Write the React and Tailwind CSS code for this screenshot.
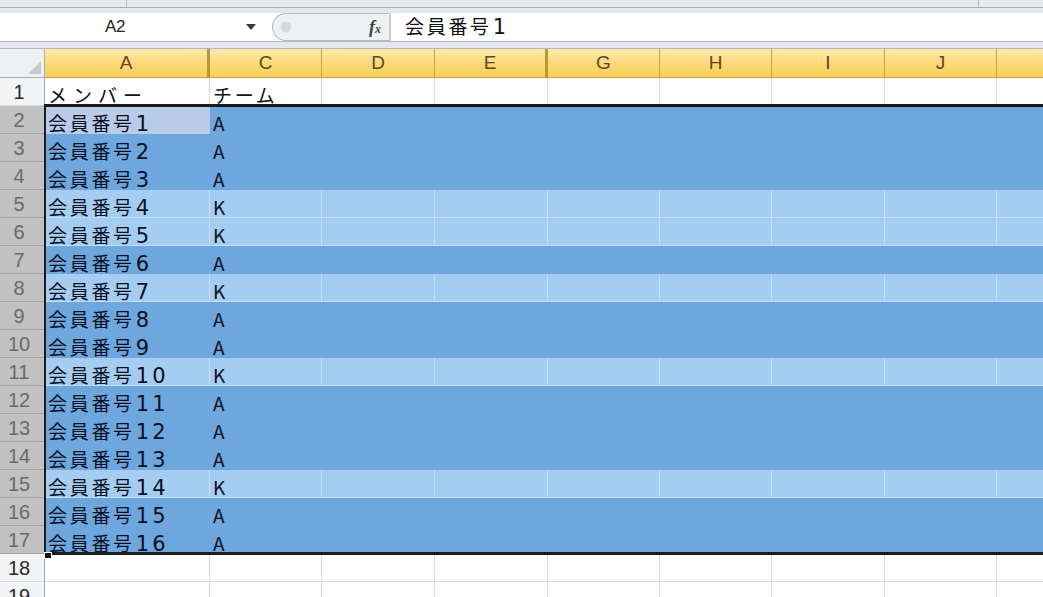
import React from "react";

const COLS = [
  { l: "A", w: "w-[165px]", thick: true },
  { l: "C", w: "w-[112px]" },
  { l: "D", w: "w-[113px]" },
  { l: "E", w: "w-[113px]", thick: true },
  { l: "G", w: "w-[112px]" },
  { l: "H", w: "w-[112px]" },
  { l: "I", w: "w-[113px]" },
  { l: "J", w: "w-[112px]" },
  { l: "", w: "w-[112px]" },
];

const TEAMS = ["A", "A", "A", "K", "K", "A", "K", "A", "A", "K", "A", "A", "A", "K", "A", "A"];

const CJK = { fontFamily: '"Noto Sans CJK JP", "Noto Sans", sans-serif' };
const LAT = { fontFamily: '"Liberation Sans", Arial, sans-serif' };
const DIG = { fontFamily: '"DejaVu Sans", "Liberation Sans", sans-serif' };

function Txt({ text, wide }) {
  if (!text) return null;
  const parts = text.match(/(\d+|\D+)/g) || [];
  return (
    <span className="whitespace-nowrap">
      {parts.map((p, i) =>
        /\d/.test(p) ? (
          <span key={i} style={DIG} className="text-[21px] tracking-[3px] ml-[1px]">
            {p}
          </span>
        ) : (
          <span
            key={i}
            style={CJK}
            className={"text-[19px] " + (wide ? "tracking-[6px]" : "tracking-[2.7px]")}
          >
            {p}
          </span>
        )
      )}
    </span>
  );
}

function RowHeader({ num, sel }) {
  return (
    <div
      style={LAT}
      className={
        "w-[45px] shrink-0 h-[28px] border-r border-b flex items-center justify-center pr-[6px] text-[20px] leading-none " +
        (sel
          ? "bg-[#c1c1c1] text-[#6a6a6a] border-r-[#8e8e8e] border-b-[#a2a2a2]"
          : "bg-[#f3f4f5] text-[#2a2a2a] border-r-[#9ea2a6] border-b-[#d5d7da]")
      }
    >
      {num}
    </div>
  );
}

function Cell({ w, text, kind, wide }) {
  let cls = "";
  if (kind === "white") cls = "bg-white border-r-[#d9dbdd] border-b-[#d9dbdd]";
  else if (kind === "K") cls = "bg-[#a5cdf1] border-r-[#c4def6] border-b-[#c4def6]";
  else if (kind === "A") cls = "bg-[#6ea6de] border-r-[#6ea6de] border-b-[#6ea6de]";
  else if (kind === "active") cls = "bg-[#b9cbe8] border-r-[#b9cbe8] border-b-[#b9cbe8]";
  return (
    <div
      className={
        w +
        " shrink-0 h-[28px] border-r border-b flex items-end whitespace-nowrap leading-[16px] pl-[3px] text-[#0a1120] " +
        cls
      }
    >
      <Txt text={text} wide={wide} />
    </div>
  );
}

function DataRow({ num, sel, values, kinds, wide }) {
  return (
    <div className="flex">
      <RowHeader num={num} sel={sel} />
      {COLS.map((c, i) => (
        <Cell key={i} w={c.w} text={values[i] || ""} kind={kinds[i]} wide={wide && i === 0} />
      ))}
    </div>
  );
}

function Formula() {
  return (
    <div className="h-[29px] bg-white flex border-b border-[#b9bdc2]">
      <div className="w-[230px] shrink-0 flex items-center justify-center">
        <span style={LAT} className="text-[17px] text-[#222] tracking-[-0.5px]">A2</span>
      </div>
      <div className="w-[42px] shrink-0 flex items-center justify-center">
        <svg width="10" height="6" viewBox="0 0 10 6">
          <path d="M0 0 L10 0 L5 6 Z" fill="#3a3a3a" />
        </svg>
      </div>
      <div className="w-[117px] shrink-0 h-full rounded-l-full border-l border-y border-[#b3b7bc] bg-[#eef0f2] flex items-center relative">
        <div className="ml-[7px] w-[12px] h-[12px] rounded-full bg-[#d3d6da] border border-[#e6e8ea]" />
        <div className="ml-auto mr-[8px] flex items-baseline" style={{ fontFamily: '"Liberation Serif", serif' }}>
          <span className="italic font-bold text-[18px] text-[#444]">f</span>
          <span className="italic font-bold text-[12px] text-[#444]">x</span>
        </div>
      </div>
      <div className="w-[2px] shrink-0 bg-[#c8cbcf]" />
      <div className="flex-1 flex items-center pl-[14px] leading-[22px] text-[#111]">
        <Txt text="会員番号1" />
      </div>
    </div>
  );
}

export default function App() {
  return (
    <div className="w-[1043px] h-[597px] overflow-hidden bg-white relative">
      {/* ribbon remnant */}
      <div className="h-[8px] bg-[#e6e9ed] flex border-b border-[#a9aeb4]">
        <div className="w-[127px] border-r border-[#b8bcc1]" />
        <div className="w-[852px] border-r border-[#b8bcc1]" />
        <div className="flex-1" />
      </div>
      <div className="h-[5px] bg-[#e3e6ea]" />
      <Formula />
      <div className="h-[7px] bg-[#e4e7eb] border-b border-[#b4b8bd]" />

      {/* column headers */}
      <div className="flex h-[29px]">
        <div className="w-[45px] shrink-0 bg-[#eef0f2] border-r border-b border-[#a9adb2] relative">
          <svg className="absolute right-[3px] bottom-[3px]" width="13" height="13" viewBox="0 0 13 13">
            <path d="M13 0 L13 13 L0 13 Z" fill="#c7cacd" />
          </svg>
        </div>
        {COLS.map((c, i) => (
          <div
            key={i}
            style={LAT}
            className={
              c.w +
              " shrink-0 bg-gradient-to-b from-[#fdeab0] via-[#fcd978] to-[#f9d15a] border-b border-b-[#c5a040] flex items-center justify-center text-[19px] text-[#5a4a26] " +
              (c.thick ? "border-r-[3px] border-r-[#b9963c]" : "border-r border-r-[#c7a34a]")
            }
          >
            {c.l}
          </div>
        ))}
      </div>

      {/* row 1 */}
      <DataRow
        num="1"
        sel={false}
        values={["メンバー", "チーム"]}
        kinds={COLS.map(() => "white")}
        wide
      />

      {/* selected rows */}
      <div className="relative">
        {TEAMS.map((t, i) => {
          const kinds = COLS.map((_, ci) => (i === 0 && ci === 0 ? "active" : t));
          return (
            <DataRow
              key={i}
              num={String(i + 2)}
              sel={true}
              values={["会員番号" + (i + 1), t]}
              kinds={kinds}
            />
          );
        })}
        <div className="absolute top-[-2px] left-[44px] right-[-10px] bottom-[-1px] border-t-[3px] border-b-[3px] border-l-[2px] border-[#1d1b1a] pointer-events-none" />
        <div className="absolute left-[44px] bottom-[-5px] w-[8px] h-[7px] bg-[#111] border border-white pointer-events-none" />
      </div>

      <DataRow num="18" sel={false} values={[]} kinds={COLS.map(() => "white")} />
      <DataRow num="19" sel={false} values={[]} kinds={COLS.map(() => "white")} />
    </div>
  );
}
